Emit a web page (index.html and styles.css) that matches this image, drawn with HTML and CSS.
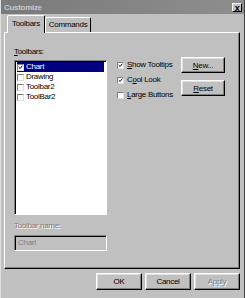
FILE: index.html
```html
<!DOCTYPE html>
<html lang="en">
<head>
    <meta charset="UTF-8">
    <meta name="viewport" content="width=device-width, initial-scale=1.0">
    <title>Customize</title>
    <link rel="stylesheet" href="styles.css">
</head>
<body>
    <div class="window">
        <div class="titlebar">
            <span class="title">Customize</span>
            <span class="close">x</span>
        </div>
        <div class="tabs">
            <div class="tab active">Toolbars</div>
            <div class="tab">Commands</div>
        </div>
        <div class="panel">
            <div class="left">
                <div class="label"><u>T</u>oolbars:</div>
                <div class="listbox">
                    <div class="item selected">
                        <span class="check"><svg viewBox="0 0 7 7"><path d="M1 3 L3 5 L6 1" fill="none" stroke="#000" stroke-width="1.4"/></svg></span>Chart
                    </div>
                    <div class="item"><span class="check"></span>Drawing</div>
                    <div class="item"><span class="check"></span>Toolbar2</div>
                    <div class="item"><span class="check"></span>ToolBar2</div>
                </div>
                <div class="label disabled">Toolbar name:</div>
                <div class="field">Chart</div>
            </div>
            <div class="options">
                <div class="option">
                    <span class="check"><svg viewBox="0 0 7 7"><path d="M1 3 L3 5 L6 1" fill="none" stroke="#000" stroke-width="1.4"/></svg></span><u>S</u>how Tooltips
                </div>
                <div class="option">
                    <span class="check"><svg viewBox="0 0 7 7"><path d="M1 3 L3 5 L6 1" fill="none" stroke="#000" stroke-width="1.4"/></svg></span>C<u>o</u>ol Look
                </div>
                <div class="option"><span class="check"></span><u>L</u>arge Buttons</div>
            </div>
            <div class="actions">
                <button class="btn"><u>N</u>ew...</button>
                <button class="btn"><u>R</u>eset</button>
            </div>
        </div>
        <div class="footer">
            <button class="btn">OK</button>
            <button class="btn">Cancel</button>
            <button class="btn disabled">Apply</button>
        </div>
    </div>
</body>
</html>
```

FILE: styles.css
```css
body { margin: 0; background: #c0c0c0; font-family: "Liberation Sans", Arial, sans-serif; font-size: 8px; letter-spacing: -0.3px; color: #000; }
u { text-decoration: underline; }

.window {
    width: 245px;
    height: 298px;
    box-sizing: border-box;
    background: #c0c0c0;
    border-left: 1px solid #dfdfdf;
    border-right: 1px solid #404040;
    overflow: hidden;
}
.titlebar {
    height: 14px;
    display: flex;
    align-items: center;
    justify-content: space-between;
    padding: 0 2px 0 3px;
    background: linear-gradient(to right, #7a7a7a, #8e8e8e);
}
.title { color: #c8c8c8; font-weight: bold; }
.close {
    width: 10px;
    height: 9px;
    line-height: 8px;
    text-align: center;
    font-weight: bold;
    font-size: 9px;
    background: #c0c0c0;
    border: 1px solid;
    border-color: #fff #000 #000 #fff;
    box-sizing: border-box;
}

.tabs {
    height: 18px;
    display: flex;
    align-items: flex-end;
    padding-left: 6px;
}
.tab {
    height: 15px;
    line-height: 14px;
    padding: 0 3px;
    box-sizing: border-box;
    border: 1px solid;
    border-bottom: none;
    border-color: #fff #000 transparent #fff;
    border-radius: 2px 2px 0 0;
    position: relative;
    z-index: 1;
}
.tab.active {
    height: 18px;
    margin-bottom: -1px;
    padding: 0 4px;
    line-height: 16px;
    background: #c0c0c0;
}

.panel {
    width: 236px;
    height: 237px;
    margin-left: 3px;
    box-sizing: border-box;
    border: 1px solid;
    border-color: #fff #000 #000 #fff;
    box-shadow: inset -1px -1px #808080;
    padding: 14px 14px 0 9px;
    display: flex;
}
.left { width: 93px; display: flex; flex-direction: column; }
.label { line-height: 10px; height: 10px; margin-bottom: 3px; }
.label.disabled { color: #808080; text-shadow: 1px 1px #fff; margin-top: 6px; margin-bottom: 4px; }
.listbox {
    height: 155px;
    box-sizing: border-box;
    background: #fff;
    border: 1px solid;
    border-color: #808080 #fff #fff #808080;
    box-shadow: inset 1px 1px #000;
    padding: 1px 2px 0 2px;
}
.item { height: 10px; line-height: 10px; display: flex; align-items: center; }
.item.selected { background: #000080; color: #fff; }
.check {
    width: 7px;
    height: 7px;
    box-sizing: border-box;
    margin-right: 2px;
    background: #fff;
    border: 1px solid;
    border-color: #808080 #dfdfdf #dfdfdf #808080;
    display: flex;
}
.check svg { width: 5px; height: 5px; }
.field {
    height: 16px;
    box-sizing: border-box;
    border: 1px solid;
    border-color: #808080 #fff #fff #808080;
    box-shadow: inset 1px 1px #000;
    padding-left: 3px;
    line-height: 14px;
    color: #808080;
}

.options { margin: 13px 0 0 10px; display: flex; flex-direction: column; gap: 5px; }
.option { height: 10px; line-height: 10px; display: flex; align-items: center; }
.option .check { width: 7px; height: 7px; margin-right: 3px; }

.actions { margin: 10px 0 0 auto; display: flex; flex-direction: column; gap: 7px; }
.btn {
    font: inherit;
    letter-spacing: inherit;
    color: #000;
    background: #c0c0c0;
    border: 1px solid;
    border-color: #fff #000 #000 #fff;
    box-shadow: inset -1px -1px #808080, inset 1px 1px #dfdfdf;
    padding: 0;
    width: 44px;
    height: 16px;
}
.btn.disabled { color: #808080; text-shadow: 1px 1px #fff; }

.footer { display: flex; justify-content: flex-end; gap: 3px; padding: 4px 4px 0 0; }
.footer .btn { width: 46px; height: 17px; }
```
